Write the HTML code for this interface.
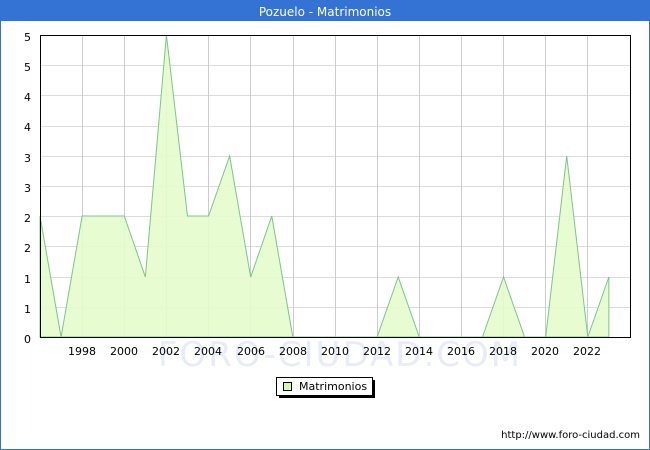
<!DOCTYPE html>
<html><head><style>
html,body{margin:0;padding:0;background:#fff}
svg{display:block}
text{font-family:"DejaVu Sans","Liberation Sans",sans-serif}
</style></head><body>
<svg width="650" height="450" viewBox="0 0 650 450">
<rect x="0.5" y="0.5" width="649" height="449" fill="#fff" stroke="#3473d4" stroke-width="1"/>
<rect x="0" y="0" width="650" height="21" fill="#3473d4"/>
<text x="325" y="16" fill="#fff" font-size="12" text-anchor="middle">Pozuelo - Matrimonios</text>
<g stroke="#dcdcdc" stroke-width="1">
<line x1="40" x2="630" y1="65.5" y2="65.5"/><line x1="40" x2="630" y1="95.5" y2="95.5"/>
<line x1="40" x2="630" y1="126.5" y2="126.5"/><line x1="40" x2="630" y1="156.5" y2="156.5"/>
<line x1="40" x2="630" y1="186.5" y2="186.5"/><line x1="40" x2="630" y1="216.5" y2="216.5"/>
<line x1="40" x2="630" y1="246.5" y2="246.5"/><line x1="40" x2="630" y1="277.5" y2="277.5"/>
<line x1="40" x2="630" y1="307.5" y2="307.5"/>
</g>
<g stroke="#cccccc" stroke-width="1">
<line x1="82.5" x2="82.5" y1="35" y2="337"/><line x1="124.5" x2="124.5" y1="35" y2="337"/>
<line x1="166.5" x2="166.5" y1="35" y2="337"/><line x1="208.5" x2="208.5" y1="35" y2="337"/>
<line x1="250.5" x2="250.5" y1="35" y2="337"/><line x1="293.5" x2="293.5" y1="35" y2="337"/>
<line x1="335.5" x2="335.5" y1="35" y2="337"/><line x1="377.5" x2="377.5" y1="35" y2="337"/>
<line x1="419.5" x2="419.5" y1="35" y2="337"/><line x1="461.5" x2="461.5" y1="35" y2="337"/>
<line x1="503.5" x2="503.5" y1="35" y2="337"/><line x1="545.5" x2="545.5" y1="35" y2="337"/>
<line x1="587.5" x2="587.5" y1="35" y2="337"/>
</g>
<text x="340" y="366" font-size="34" fill="#e8ecf6" text-anchor="middle" letter-spacing="2">FORO-CIUDAD.COM</text>
<g transform="translate(40,0) scale(1.0033,1)">
<polygon fill="#e4fccc" fill-opacity="0.9" stroke="#7cc48c" stroke-width="1" points="0,216 21,337 42,216 63,216 84,216 105,277 126,35 147,216 168,216 189,156 210,277 231,216 252,337 273,337 294,337 315,337 336,337 357,277 378,337 399,337 420,337 441,337 462,277 483,337 504,337 525,156 546,337 567,277 567,337 0,337"/>
</g>
<rect x="40.5" y="35.5" width="590" height="302" fill="none" stroke="#000" stroke-width="1"/>
<g font-size="11" fill="#000" text-anchor="end">
<text x="31" y="41">5</text><text x="31" y="71">5</text><text x="31" y="101">4</text>
<text x="31" y="131">4</text><text x="31" y="162">3</text><text x="31" y="192">3</text>
<text x="31" y="222">2</text><text x="31" y="252">2</text><text x="31" y="283">1</text>
<text x="31" y="313">1</text><text x="31" y="343">0</text>
</g>
<g font-size="11" fill="#000" text-anchor="middle">
<text x="82" y="355">1998</text><text x="124" y="355">2000</text><text x="166" y="355">2002</text>
<text x="208" y="355">2004</text><text x="251" y="355">2006</text><text x="293" y="355">2008</text>
<text x="335" y="355">2010</text><text x="377" y="355">2012</text><text x="419" y="355">2014</text>
<text x="461" y="355">2016</text><text x="503" y="355">2018</text><text x="545" y="355">2020</text>
<text x="587" y="355">2022</text>
</g>
<rect x="279" y="380" width="96" height="18" fill="#000"/>
<rect x="276.5" y="377.5" width="96" height="18" fill="#fff" stroke="#000"/>
<rect x="283.5" y="382.5" width="8" height="8" fill="#d4f8a8" stroke="#000"/>
<text x="299" y="390" font-size="11">Matrimonios</text>
<text x="640" y="438" font-size="10" text-anchor="end">http://www.foro-ciudad.com</text>
</svg>
</body></html>
